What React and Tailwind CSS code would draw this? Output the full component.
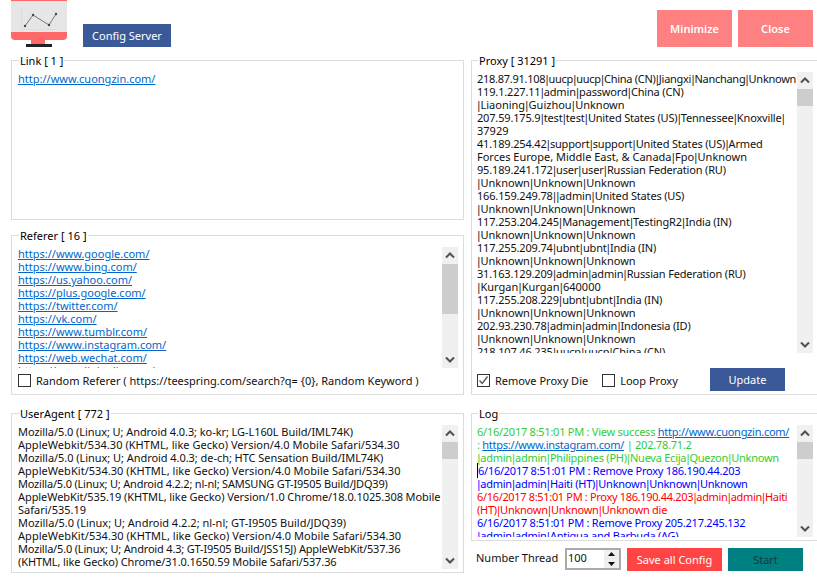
import React from "react";

function Chevron({ up }) {
  return (
    <svg width="16" height="17" viewBox="0 0 16 17" fill="none" className="block shrink-0">
      <path d={up ? "M4 10.5 L8 6.5 L12 10.5" : "M4 6.5 L8 10.5 L12 6.5"} stroke="#505050" strokeWidth="2" />
    </svg>
  );
}

function ScrollBar({ thumb, offset = 0 }) {
  return (
    <div className="w-4 shrink-0 bg-[#f0f0f0] flex flex-col">
      <Chevron up />
      <div className="flex-1">
        <div className="bg-[#cdcdcd]" style={{ height: thumb, marginTop: offset }} />
      </div>
      <Chevron />
    </div>
  );
}

function Group({ title, className, children }) {
  return (
    <fieldset className={"border border-[#dcdcdc] min-w-0 flex flex-col " + className}>
      <legend className="ml-[1px] px-[1px] text-[11px] leading-[13px] text-black">{title}</legend>
      {children}
    </fieldset>
  );
}

function Check({ checked }) {
  return (
    <span className="w-[13px] h-[13px] border border-[#333333] bg-white shrink-0 flex items-center justify-center">
      {checked && (
        <svg width="11" height="11" viewBox="0 0 11 11" fill="none">
          <path d="M1.5 5.5 L4.2 8.5 L9.5 1.5" stroke="#555555" strokeWidth="1.3" />
        </svg>
      )}
    </span>
  );
}

function A({ children }) {
  return <span className="text-[#0066cc] underline">{children}</span>;
}

// Narrow the vertical bars, which are wider in this font than in the reference.
function P({ children }) {
  return children.split(/(\|)/).map((s, i) =>
    s === "|" ? (
      <span key={i} className="mx-[-1.3px]">|</span>
    ) : (
      <React.Fragment key={i}>{s}</React.Fragment>
    )
  );
}

const referers = [
  "https://www.google.com/",
  "https://www.bing.com/",
  "https://us.yahoo.com/",
  "https://plus.google.com/",
  "https://twitter.com/",
  "https://vk.com/",
  "https://www.tumblr.com/",
  "https://www.instagram.com/",
  "https://web.wechat.com/",
  "https://www.linkedin.com/",
];

const proxies = [
  "218.87.91.108|uucp|uucp|China (CN)|Jiangxi|Nanchang|Unknown",
  "119.1.227.11|admin|password|China (CN)",
  "|Liaoning|Guizhou|Unknown",
  "207.59.175.9|test|test|United States (US)|Tennessee|Knoxville|",
  "37929",
  "41.189.254.42|support|support|United States (US)|Armed",
  "Forces Europe, Middle East, & Canada|Fpo|Unknown",
  "95.189.241.172|user|user|Russian Federation (RU)",
  "|Unknown|Unknown|Unknown",
  "166.159.249.78||admin|United States (US)",
  "|Unknown|Unknown|Unknown",
  "117.253.204.245|Management|TestingR2|India (IN)",
  "|Unknown|Unknown|Unknown",
  "117.255.209.74|ubnt|ubnt|India (IN)",
  "|Unknown|Unknown|Unknown",
  "31.163.129.209|admin|admin|Russian Federation (RU)",
  "|Kurgan|Kurgan|640000",
  "117.255.208.229|ubnt|ubnt|India (IN)",
  "|Unknown|Unknown|Unknown",
  "202.93.230.78|admin|admin|Indonesia (ID)",
  "|Unknown|Unknown|Unknown",
  "218.107.46.235|uucp|uucp|China (CN)",
];

const agents = [
  ["Mozilla/5.0 (Linux; U; Android 4.0.3; ko-kr; LG-L160L Build/IML74K)", "tracking-[-0.07px]"],
  ["AppleWebkit/534.30 (KHTML, like Gecko) Version/4.0 Mobile Safari/534.30", "tracking-[0.04px]"],
  ["Mozilla/5.0 (Linux; U; Android 4.0.3; de-ch; HTC Sensation Build/IML74K)", "tracking-[-0.05px]"],
  ["AppleWebKit/534.30 (KHTML, like Gecko) Version/4.0 Mobile Safari/534.30", "tracking-[0.04px]"],
  ["Mozilla/5.0 (Linux; U; Android 4.2.2; nl-nl; SAMSUNG GT-I9505 Build/JDQ39)", "tracking-[-0.2px]"],
  ["AppleWebKit/535.19 (KHTML, like Gecko) Version/1.0 Chrome/18.0.1025.308 Mobile", "tracking-[-0.08px]"],
  ["Safari/535.19", ""],
  ["Mozilla/5.0 (Linux; U; Android 4.2.2; nl-nl; GT-I9505 Build/JDQ39)", ""],
  ["AppleWebKit/534.30 (KHTML, like Gecko) Version/4.0 Mobile Safari/534.30", "tracking-[0.05px]"],
  ["Mozilla/5.0 (Linux; U; Android 4.3; GT-I9505 Build/JSS15J) AppleWebKit/537.36", "tracking-[-0.18px]"],
  ["(KHTML, like Gecko) Chrome/31.0.1650.59 Mobile Safari/537.36", "tracking-[-0.1px]"],
];

export default function App() {
  return (
    <div
      className="w-[817px] h-[584px] overflow-hidden bg-white text-[11px] leading-[13px] text-[#111111]"
      style={{ fontFamily: '"Noto Sans", sans-serif' }}
    >
      <header className="h-[54px] flex items-start pl-[11px]">
        <svg width="56" height="47" viewBox="0 0 56 47" className="block shrink-0">
          <path d="M0 0H56V36a4 4 0 0 1-4 4H4a4 4 0 0 1-4-4Z" fill="#ff6868" />
          <rect x="0" y="1" width="56" height="31" fill="#e6e6e6" />
          <rect x="20" y="40" width="14" height="4" fill="#ff6868" />
          <rect x="15" y="44" width="26" height="3" fill="#222222" />
          <path d="M10.5 7V29.5H45" fill="none" stroke="#f3dfa0" strokeWidth="1" />
          <path d="M14 26L22 15L38 25L45 14" fill="none" stroke="#777777" strokeWidth="1" />
          <circle cx="14" cy="26" r="1.2" fill="#444444" />
          <circle cx="22" cy="15" r="1.2" fill="#444444" />
          <circle cx="38" cy="25" r="1.2" fill="#444444" />
          <circle cx="45" cy="14" r="1.2" fill="#444444" />
        </svg>
        <button className="ml-[16px] mt-[24px] w-[88px] h-[23px] bg-[#3b5998] text-white">Config Server</button>
        <button className="ml-auto mt-[10px] w-[75px] h-[37px] bg-[#ff8080] text-white font-semibold">Minimize</button>
        <button className="ml-[6px] mr-[4px] mt-[10px] w-[75px] h-[37px] bg-[#ff8080] text-white font-semibold">Close</button>
      </header>

      <main className="ml-[11px] flex gap-[7px] w-[812px]">
        <div className="w-[453px] shrink-0 flex flex-col">
          <Group title="Link [ 1 ]" className="h-[166px] px-[6px] pt-[5px]">
            <div><A>http://www.cuongzin.com/</A></div>
          </Group>
          <Group title="Referer [ 16 ]" className="h-[166px] mt-[9px] pl-[6px] pr-[5px]">
            <div className="flex h-[121px] mt-[5px]">
              <div className="flex-1 overflow-hidden">
                {referers.map((r) => (
                  <div key={r}><A>{r}</A></div>
                ))}
              </div>
              <ScrollBar thumb={50} />
            </div>
            <label className="flex items-center gap-[5px] mt-[6px]">
              <Check />
              <span>Random Referer ( https://teespring.com/search?q= {"{0}"}, Random Keyword )</span>
            </label>
          </Group>
          <Group title="UserAgent [ 772 ]" className="h-[166px] mt-[12px] pl-[6px] pr-[5px]">
            <div className="flex h-[144px] mt-[5px]">
              <div className="flex-1 overflow-hidden">
                {agents.map(([t, c], i) => (
                  <div key={i} className={"whitespace-nowrap " + c}>{t}</div>
                ))}
              </div>
              <ScrollBar thumb={17} />
            </div>
          </Group>
        </div>

        <div className="w-[352px] shrink-0 flex flex-col">
          <Group title="Proxy [ 31291 ]" className="h-[341px] pl-[5px] pr-[9px]">
            <div className="flex h-[281px] mt-[5px]">
              <div className="flex-1 overflow-hidden">
                {proxies.map((t, i) => (
                  <div
                    key={i}
                    className={"whitespace-nowrap " + (i === 0 ? "tracking-[-0.27px]" : /^\d+\./.test(t) ? "tracking-[-0.17px]" : "")}
                  >
                    <P>{t}</P>
                  </div>
                ))}
              </div>
              <ScrollBar thumb={17} />
            </div>
            <div className="flex items-center mt-[17px]">
              <label className="flex items-center gap-[5px]"><Check checked /><span>Remove Proxy Die</span></label>
              <label className="flex items-center gap-[5px] ml-[14px]"><Check /><span>Loop Proxy</span></label>
              <button className="ml-auto mr-[28px] -mt-[2px] w-[75px] h-[23px] bg-[#3b5998] text-white">Update</button>
            </div>
          </Group>
          <Group title="Log" className="h-[134px] mt-[12px] pl-[5px] pr-[9px]">
            <div className="flex h-[112px] mt-[5px]">
              <div className="flex-1 overflow-hidden whitespace-nowrap tracking-[-0.25px]">
                <div className="text-[#32cd32]">
                  <div>6/16/2017 8:51:01 PM : View success <A>http://www.cuongzin.com/</A></div>
                  <div>: <A>https://www.instagram.com/</A> | 202.78.71.2</div>
                  <div><P>|admin|admin|Philippines (PH)|Nueva Ecija|Quezon|Unknown</P></div>
                </div>
                <div className="text-[#0000ff]">
                  <div><span className="border-l border-black" />6/16/2017 8:51:01 PM : Remove Proxy 186.190.44.203</div>
                  <div><P>|admin|admin|Haiti (HT)|Unknown|Unknown|Unknown</P></div>
                </div>
                <div className="text-[#ff0000]">
                  <div className="tracking-[-0.33px]"><P>6/16/2017 8:51:01 PM : Proxy 186.190.44.203|admin|admin|Haiti</P></div>
                  <div><P>(HT)|Unknown|Unknown|Unknown die</P></div>
                </div>
                <div className="text-[#0000ff]">
                  <div>6/16/2017 8:51:01 PM : Remove Proxy 205.217.245.132</div>
                  <div><P>|admin|admin|Antigua and Barbuda (AG)</P></div>
                </div>
              </div>
              <ScrollBar thumb={17} />
            </div>
          </Group>
          <div className="flex items-start mt-[7px] pl-[5px]">
            <span className="w-[89px] whitespace-nowrap mt-[3px]">Number Thread</span>
            <div className="w-[56px] h-[22px] border-2 border-[#aaaaaa] flex items-center justify-between pl-[1px]">
              <span className="pb-[3px]">100</span>
              <div className="w-[15px] h-full flex flex-col gap-[1px] bg-[#e8e8e8]">
                <svg width="15" height="8" viewBox="0 0 15 8" className="block bg-[#f0f0f0]"><path d="M4 6H11L7.5 2Z" fill="#111111" /></svg>
                <svg width="15" height="9" viewBox="0 0 15 9" className="block bg-[#f0f0f0]"><path d="M4 3H11L7.5 7Z" fill="#111111" /></svg>
              </div>
            </div>
            <button className="ml-[6px] w-[95px] h-[23px] bg-[#ff4444] text-white">Save all Config</button>
            <button className="ml-[6px] w-[75px] h-[23px] bg-[#008080] text-[#123c3c]">Start</button>
          </div>
        </div>
      </main>
    </div>
  );
}
